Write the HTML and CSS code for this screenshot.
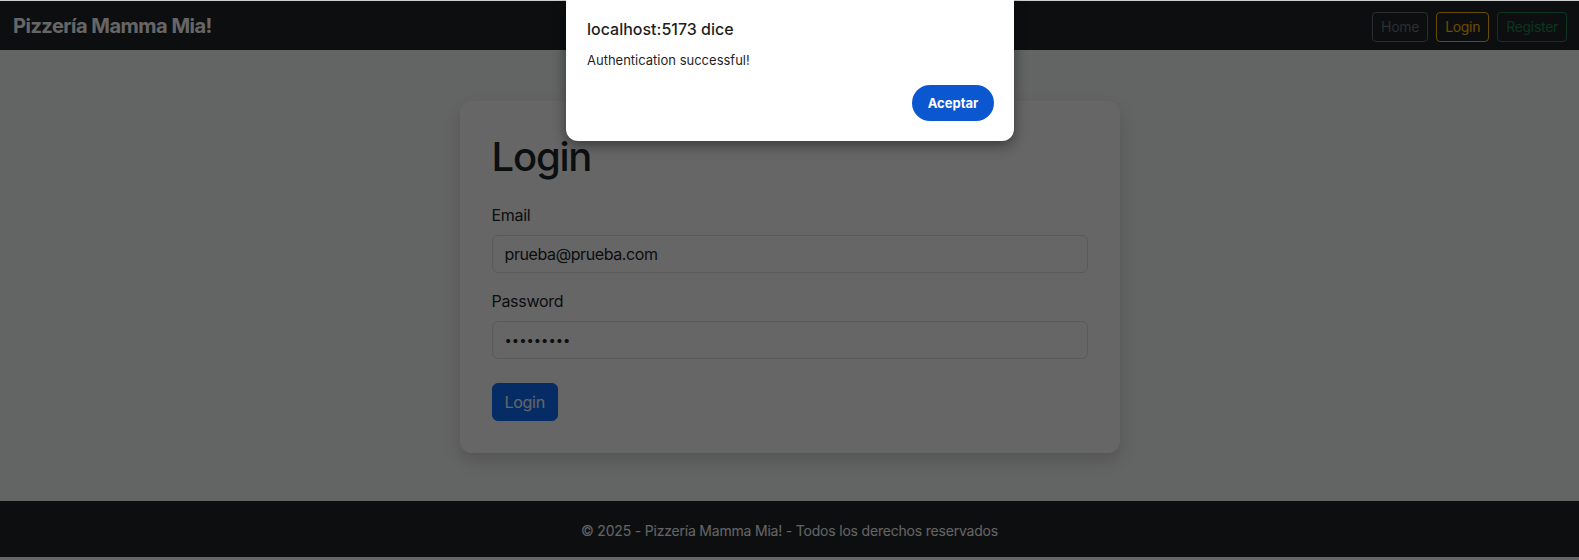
FILE: index.html
```html
<!DOCTYPE html>
<html lang="es">
<head>
<meta charset="utf-8">
<title>Pizzería Mamma Mia!</title>
<link rel="stylesheet" href="styles.css">
</head>
<body>
<div class="topline"></div>
<nav class="navbar">
  <a class="brand" href="#">Pizzería Mamma Mia!</a>
  <div class="nav-actions">
    <button class="btn btn-sm btn-outline-secondary">Home</button>
    <button class="btn btn-sm btn-outline-warning">Login</button>
    <button class="btn btn-sm btn-outline-success">Register</button>
  </div>
</nav>
<main class="main">
  <div class="card">
    <h1 class="card-title">Login</h1>
    <form class="form">
      <div class="field">
        <label class="form-label" for="email">Email</label>
        <input class="form-control" id="email" type="email" value="prueba@prueba.com">
      </div>
      <div class="field field-last">
        <label class="form-label" for="password">Password</label>
        <input class="form-control form-control-password" id="password" type="password" value="123456789">
      </div>
      <div>
        <button type="button" class="btn btn-primary">Login</button>
      </div>
    </form>
  </div>
</main>
<footer class="footer">
  <p class="footer-text">© 2025 - Pizzería Mamma Mia! - Todos los derechos reservados</p>
</footer>

<div class="overlay"></div>
<div class="dialog" role="alertdialog">
  <div class="dialog-title">localhost:5173 dice</div>
  <div class="dialog-message">Authentication successful!</div>
  <div class="dialog-actions">
    <button class="dialog-btn">Aceptar</button>
  </div>
</div>
</body>
</html>
```
FILE: styles.css
```css
* { box-sizing: border-box; }

html, body {
  margin: 0;
  padding: 0;
}

body {
  font-family: Inter, "Noto Sans", "Liberation Sans", sans-serif;
  color: #212529;
  background: #ffffff;
  height: 560px;
  overflow: hidden;
  position: relative;
  letter-spacing: -0.3px;
}

.topline {
  height: 1px;
  background: #cfcfcf;
  position: relative;
  z-index: 20;
}

.navbar {
  height: 49px;
  background: #212529;
  display: flex;
  align-items: center;
  justify-content: space-between;
  padding: 0 12px 0 13px;
}

.brand {
  color: #ffffff;
  font-size: 20px;
  font-weight: 700;
  text-decoration: none;
  letter-spacing: -0.5px;
  padding-top: 1px;
}

.nav-actions {
  display: flex;
  gap: 8px;
  padding-top: 2px;
}

.btn {
  font-family: inherit;
  letter-spacing: -0.3px;
  display: inline-block;
  border: 1px solid transparent;
  background: transparent;
  font-size: 16px;
  line-height: 24px;
  padding: 6px 12px;
  border-radius: 6px;
  cursor: pointer;
}

.btn-sm {
  font-size: 14px;
  line-height: 20px;
  padding: 4px 8px;
  border-radius: 4px;
}

.btn-outline-secondary { color: #6c757d; border-color: #6c757d; }
.btn-outline-warning { color: #ffc107; border-color: #ffc107; }
.btn-outline-success { color: #198754; border-color: #198754; }

.btn-primary {
  color: #ffffff;
  background: #0d6efd;
  border-color: #0d6efd;
}

.main {
  height: 451px;
  background: #f8f9fa;
  padding-top: 51px;
}

.card {
  width: 660px;
  margin: 0 auto;
  background: #ffffff;
  border-radius: 12px;
  box-shadow: 0 8px 16px rgba(0, 0, 0, 0.15);
  padding: 32px;
}

.card-title {
  margin: 0 0 22px 0;
  font-size: 40px;
  line-height: 48px;
  font-weight: 500;
  letter-spacing: -1.2px;
}

.field { margin-bottom: 16px; }
.field-last { margin-bottom: 24px; }

.form-label {
  display: block;
  font-size: 16px;
  line-height: 24px;
  margin-bottom: 8px;
}

.form-control {
  display: block;
  width: 100%;
  font-family: inherit;
  letter-spacing: -0.4px;
  font-size: 16px;
  line-height: 24px;
  height: 38px;
  padding: 6px 12px;
  color: #212529;
  background: #ffffff;
  border: 1px solid #dee2e6;
  border-radius: 6px;
}

.form-control-password {
  font-size: 13px;
  letter-spacing: 0;
}

.footer {
  height: 56px;
  background: #212529;
  display: flex;
  align-items: center;
  justify-content: center;
}

.footer-text {
  margin: 0;
  font-size: 14px;
  letter-spacing: -0.2px;
  color: #f8f9fa;
  padding-top: 2px;
}

.overlay {
  position: absolute;
  left: 0;
  right: 0;
  top: 1px;
  bottom: 0;
  background: rgba(0, 0, 0, 0.6);
  z-index: 10;
}

.dialog {
  position: absolute;
  top: 0;
  left: 566px;
  width: 448px;
  height: 141px;
  background: #ffffff;
  border-radius: 0 0 12px 12px;
  box-shadow: 0 4px 14px rgba(0, 0, 0, 0.45);
  padding: 19px 20px 20px 21px;
  z-index: 30;
  display: flex;
  flex-direction: column;
  letter-spacing: 0;
}

.dialog-title {
  font-size: 16px;
  line-height: 20px;
  font-weight: 500;
  color: #1f1f1f;
}

.dialog-message {
  margin-top: 13px;
  font-size: 13px;
  line-height: 16px;
  color: #1f1f1f;
}

.dialog-actions {
  margin-top: auto;
  display: flex;
  justify-content: flex-end;
}

.dialog-btn {
  font-family: inherit;
  height: 36px;
  width: 82px;
  border: none;
  border-radius: 18px;
  background: #0b57d0;
  color: #ffffff;
  font-size: 13px;
  font-weight: 700;
  cursor: pointer;
}
```
